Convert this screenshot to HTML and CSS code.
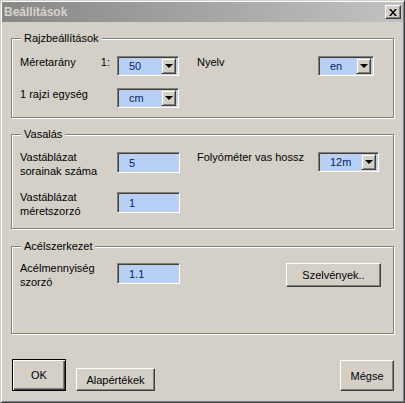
FILE: index.html
```html
<!DOCTYPE html>
<html lang="hu">
<head>
	<meta charset="UTF-8">
	<title>Beállítások</title>
	<link rel="stylesheet" href="styles.css">
</head>
<body>
	<div class="window">
		<div class="titlebar">
			<span class="title">Beállítások</span>
			<span class="close">
				<svg width="8" height="7" viewBox="0 0 8 7"><path d="M0 0h2l2 2.5 2-2.5h2l-3 3.5 3 3.5h-2l-2-2.5-2 2.5h-2l3-3.5z" fill="#000"/></svg>
			</span>
		</div>
		<div class="content">
			<fieldset class="group g1">
				<legend>Rajzbeállítások</legend>
				<div class="grid">
					<div class="label ratio"><span>Méretarány</span><span>1:</span></div>
					<div class="combo"><span class="val">50</span><span class="drop"><i></i></span></div>
					<div></div>
					<div class="label">Nyelv</div>
					<div class="combo short"><span class="val">en</span><span class="drop"><i></i></span></div>
					<div class="label">1 rajzi egység</div>
					<div class="combo"><span class="val">cm</span><span class="drop"><i></i></span></div>
				</div>
			</fieldset>
			<fieldset class="group g2">
				<legend>Vasalás</legend>
				<div class="grid">
					<div class="label">Vastáblázat<br>sorainak száma</div>
					<div class="input">5</div>
					<div></div>
					<div class="label nowrap">Folyóméter vas hossz</div>
					<div class="combo mid"><span class="val">12m</span><span class="drop"><i></i></span></div>
					<div class="label">Vastáblázat<br>méretszorzó</div>
					<div class="input">1</div>
				</div>
			</fieldset>
			<fieldset class="group g3">
				<legend>Acélszerkezet</legend>
				<div class="grid">
					<div class="label">Acélmennyiség<br>szorzó</div>
					<div class="input">1.1</div>
					<div></div>
					<div class="btn szelv">Szelvények..</div>
				</div>
			</fieldset>
			<div class="footer">
				<div class="btn ok">OK</div>
				<div class="btn reset">Alapértékek</div>
				<div class="btn cancel">Mégse</div>
			</div>
		</div>
	</div>
</body>
</html>
```

FILE: styles.css
```css
*{margin: 0;padding: 0;box-sizing: border-box;}
body{
	background-color: #d4d0c8;
	font-family: "Liberation Sans", Arial, sans-serif;
	font-size: 11px;
	color: #000;
}
.window{
	width: 405px;
	height: 403px;
	background-color: #d4d0c8;
	border: 1px solid;
	border-color: #d4d0c8 #404040 #404040 #d4d0c8;
	box-shadow: inset 1px 1px #fff, inset -1px -1px #808080;
	padding: 1px;
}
.titlebar{
	display: flex;
	align-items: center;
	justify-content: space-between;
	height: 20px;
	padding: 0 2px 0 2px;
	background: linear-gradient(to right, #878787, #c2c2c2);
}
.titlebar .title{
	font-size: 12px;
	font-weight: bold;
	color: #d8d4cc;
}
.titlebar .close{
	display: flex;
	align-items: center;
	justify-content: center;
	width: 16px;
	height: 14px;
	background-color: #d4d0c8;
	border: 1px solid;
	border-color: #fff #404040 #404040 #fff;
	box-shadow: inset -1px -1px #808080;
}
.content{
	padding: 10px 9px 0 9px;
}
.group{
	width: 383px;
	border: 1px solid #808080;
	box-shadow: inset 1px 1px #fff, 1px 1px #fff;
	padding: 11px 8px 9px 8px;
}
.group legend{
	margin-left: 1px;
	padding: 0 3px;
	line-height: 13px;
	background-color: #d4d0c8;
}
.g2{
	margin-top: 10px;
	padding-bottom: 8px;
}
.g3{
	margin-top: 11px;
	padding-top: 10px;
	padding-bottom: 42px;
}
.grid{
	display: grid;
	grid-template-columns: 97px 62px 18px 121px auto;
	row-gap: 12px;
	align-items: start;
}
.g1 .grid{
	grid-auto-rows: 20px;
}
.g2 .grid, .g3 .grid{
	grid-auto-rows: 28px;
}
.label{
	line-height: 14px;
	margin-top: -1px;
}
.g2 .label, .g3 .label{
	margin-top: -2px;
}
.label.ratio{
	display: flex;
	justify-content: space-between;
	padding-right: 7px;
}
.nowrap{
	white-space: nowrap;
}
.combo, .input{
	display: flex;
	align-items: center;
	background-color: #b7d0f6;
	color: #0c1a6e;
	border: 1px solid;
	border-color: #808080 #fff #fff #808080;
	box-shadow: inset 1px 1px #404040, inset -1px -1px #d4d0c8;
}
.combo{
	width: 62px;
	height: 20px;
	padding: 1px 2px 1px 1px;
}
.combo.short{
	width: 56px;
}
.combo.mid{
	width: 61px;
}
.combo .val{
	flex: 1;
	padding-left: 10px;
}
.combo .drop{
	display: flex;
	align-items: center;
	justify-content: center;
	width: 15px;
	height: 16px;
	background-color: #d4d0c8;
	border: 1px solid;
	border-color: #d4d0c8 #404040 #404040 #d4d0c8;
	box-shadow: inset 1px 1px #fff, inset -1px -1px #808080;
}
.combo .drop i{
	width: 0;
	height: 0;
	border-left: 4px solid transparent;
	border-right: 4px solid transparent;
	border-top: 4px solid #000;
}
.input{
	width: 63px;
	height: 21px;
	padding-left: 11px;
}
.btn{
	display: flex;
	align-items: center;
	justify-content: center;
	background-color: #d4d0c8;
	border: 1px solid;
	border-color: #fff #404040 #404040 #fff;
	box-shadow: inset -1px -1px #808080;
}
.szelv{
	grid-column: 4 / span 2;
	margin-left: 89px;
	width: 95px;
	height: 24px;
}
.footer{
	display: flex;
	align-items: flex-end;
	margin-top: 25px;
	padding-left: 1px;
}
.ok{
	width: 54px;
	height: 32px;
	border-color: #000;
	box-shadow: inset 1px 1px #fff, inset -1px -1px #404040, inset -2px -2px #808080;
}
.reset{
	width: 79px;
	height: 23px;
	margin-left: 10px;
}
.cancel{
	width: 54px;
	height: 31px;
	margin-left: auto;
}
```
